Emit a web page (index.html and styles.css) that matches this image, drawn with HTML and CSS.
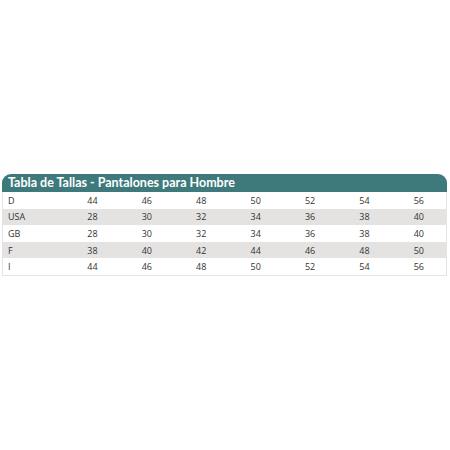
FILE: index.html
```html
<!DOCTYPE html>
<html lang="es">
<head>
  <meta charset="UTF-8" />
  <meta name="viewport" content="width=device-width, initial-scale=1.0" />
  <title>Tabla de Tallas</title>
  <link rel="stylesheet" href="styles.css">
</head>
<body>

  <div class="tallas">
    <div class="titulo">Tabla de Tallas - Pantalones para Hombre</div>
    <table>
      <tr>
        <td class="pais">D</td>
        <td>44</td><td>46</td><td>48</td><td>50</td><td>52</td><td>54</td><td>56</td>
      </tr>
      <tr class="gris">
        <td class="pais">USA</td>
        <td>28</td><td>30</td><td>32</td><td>34</td><td>36</td><td>38</td><td>40</td>
      </tr>
      <tr>
        <td class="pais">GB</td>
        <td>28</td><td>30</td><td>32</td><td>34</td><td>36</td><td>38</td><td>40</td>
      </tr>
      <tr class="gris">
        <td class="pais">F</td>
        <td>38</td><td>40</td><td>42</td><td>44</td><td>46</td><td>48</td><td>50</td>
      </tr>
      <tr>
        <td class="pais">I</td>
        <td>44</td><td>46</td><td>48</td><td>50</td><td>52</td><td>54</td><td>56</td>
      </tr>
    </table>
  </div>

</body>
</html>
```

FILE: styles.css
```css
body {
  margin: 0;
  background: #fff;
  font-family: "Open Sans", "Liberation Sans", sans-serif;
  color: #333;
}

.tallas {
  margin: 174px 3px 0 2px;
  border: 1px solid #e4e4e4;
  border-top: none;
  border-radius: 9px 9px 0 0;
}

.titulo {
  background: #3e7a7c;
  color: #fff;
  font-family: Lato, "Open Sans", sans-serif;
  font-weight: bold;
  font-size: 12.5px;
  line-height: 18px;
  padding: 0 6px;
  border-radius: 9px 9px 0 0;
  margin: 0 -1px;
}

table {
  width: 100%;
  border-collapse: collapse;
  font-size: 9px;
}

td {
  height: 16.6px;
  padding: 0;
  text-align: center;
  width: 54.4px;
}

td.pais {
  text-align: left;
  padding-left: 5px;
  width: auto;
}

tr.gris td {
  background: #e4e3e1;
}
```
